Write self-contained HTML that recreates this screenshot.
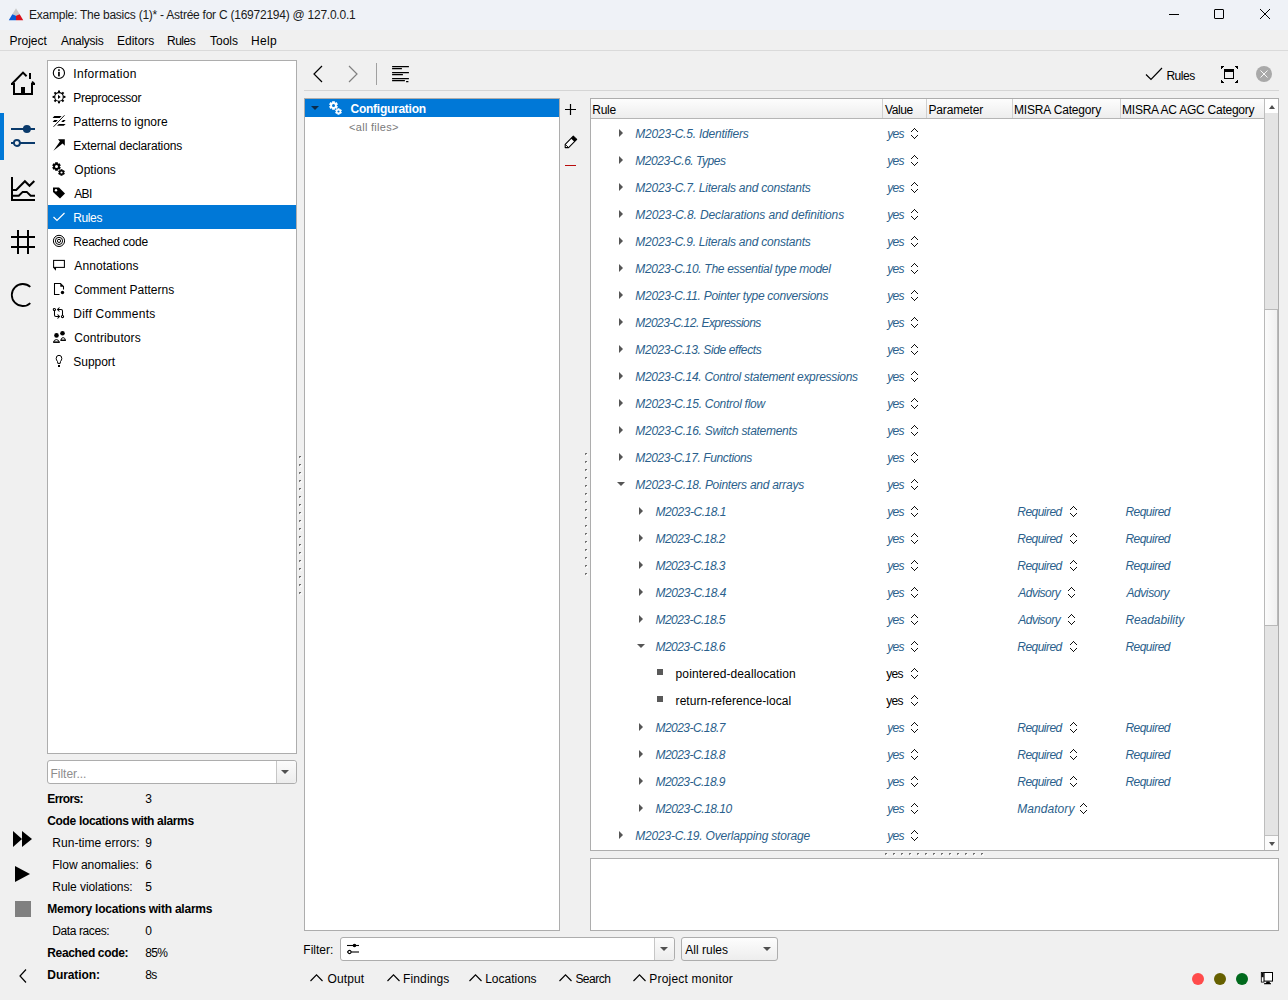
<!DOCTYPE html>
<html><head><meta charset="utf-8"><style>
*{margin:0;padding:0;box-sizing:border-box}
html,body{width:1288px;height:1000px;overflow:hidden;background:#f0f0f0;font-family:"Liberation Sans",sans-serif;font-size:12px;color:#000}
.a{position:absolute}
.t{position:absolute;white-space:nowrap;line-height:18px;font-size:12px}
.it{position:absolute;white-space:nowrap;line-height:27px;font-size:12px;font-style:italic;color:#2b5f8c}
.nt{position:absolute;white-space:nowrap;line-height:27px;font-size:12px;color:#000}
.b{font-weight:bold}
.tri-r{position:absolute;width:0;height:0;border-top:4px solid transparent;border-bottom:4px solid transparent;border-left:4px solid #555}
.tri-d{position:absolute;width:0;height:0;border-left:4px solid transparent;border-right:4px solid transparent;border-top:4px solid #555}
.sq{position:absolute;width:6px;height:6px;background:#595959}
.dot{position:absolute;width:2px;height:2px;border-top:1px solid #6a6a6a;border-left:1px solid #7e7e7e;box-shadow:1px 1px 0 #fafafa}
.ud{display:block}
.tx{position:absolute;white-space:nowrap;font-size:12px;line-height:16px}
</style></head><body>
<svg width="0" height="0" style="position:absolute"><symbol id="ud" viewBox="0 0 7 11"><rect x="0" y="3" width="1" height="1"/><rect x="1" y="2" width="1" height="1"/><rect x="2" y="1" width="1" height="1"/><rect x="3" y="0" width="1" height="1"/><rect x="4" y="1" width="1" height="1"/><rect x="5" y="2" width="1" height="1"/><rect x="6" y="3" width="1" height="1"/><rect x="0" y="7" width="1" height="1"/><rect x="1" y="8" width="1" height="1"/><rect x="2" y="9" width="1" height="1"/><rect x="3" y="10" width="1" height="1"/><rect x="4" y="9" width="1" height="1"/><rect x="5" y="8" width="1" height="1"/><rect x="6" y="7" width="1" height="1"/></symbol></svg>
<!-- title bar -->
<div class="a" style="left:0;top:0;width:1288px;height:30px;background:#eff2f7"></div>
<svg class="a" style="left:0;top:0" width="28" height="28" viewBox="0 0 28 28"><path d="M16 8.2 L19.7 14.2 L16 15.7 L12.3 14.2Z" fill="#c9c9c9"/><path d="M12.3 14.2 L16 15.7 L16 20.2 L8.8 20.2Z" fill="#0a5bd6"/><path d="M19.7 14.2 L23.2 20.2 L16 20.2 L16 15.7Z" fill="#d9101c"/></svg>
<div class="a" style="left:1169px;top:14px;width:10px;height:1px;background:#000"></div>
<div class="a" style="left:1214px;top:9px;width:10px;height:10px;border:1px solid #000;border-radius:1px"></div>
<svg class="a" style="left:1258px;top:7px" width="14" height="14" viewBox="0 0 14 14"><path d="M2 2 L12 12 M12 2 L2 12" stroke="#000" stroke-width="1"/></svg>
<!-- menu bar -->
<div class="a" style="left:0;top:30px;width:1288px;height:20px;background:#f0f0f0"></div>
<div class="a" style="left:0;top:50px;width:1288px;height:1px;background:#dadada"></div>

<!-- left icon strip -->
<div class="a" style="left:0;top:113px;width:4px;height:47px;background:#0078d7"></div>
<svg class="a" style="left:10px;top:70px" width="26" height="26" viewBox="0 0 26 26"><path d="M4 14 L4 24 L22 24 L22 14" stroke="#000" stroke-width="2" fill="none"/><path d="M1.8 14 L13 2.6 L16.6 6.2" stroke="#000" stroke-width="2" fill="none"/><rect x="1" y="13" width="4" height="2"/><rect x="21" y="13" width="4" height="2"/><path d="M22 11.6 L24.4 14" stroke="#000" stroke-width="2"/><rect x="19" y="3" width="2" height="6"/><rect x="11" y="17" width="4" height="7"/></svg>
<svg class="a" style="left:10px;top:124px" width="26" height="24" viewBox="0 0 26 24"><g stroke="#0a3a6b" stroke-width="2" fill="none"><line x1="1" y1="5" x2="25" y2="5"/><line x1="1" y1="19" x2="25" y2="19"/></g><circle cx="16.9" cy="5" r="4" fill="#0a3a6b"/><circle cx="6.9" cy="19" r="3" fill="#f0f0f0" stroke="#0a3a6b" stroke-width="1.9"/></svg>
<svg class="a" style="left:10px;top:176px" width="26" height="26" viewBox="0 0 26 26"><g stroke="#000" stroke-width="2" fill="none"><path d="M2 1 L2 24.1 L25 24.1"/><path d="M2 13.9 L6.2 13.9 L14.9 5.2 L19.5 9.8 L24.3 5"/><path d="M2 19.8 L8.8 19.8 L12.7 15.9 L16.7 15.9 L20.7 19.8 L25 19.8"/></g></svg>
<svg class="a" style="left:10px;top:229px" width="26" height="26" viewBox="0 0 26 26"><g stroke="#000" stroke-width="2"><line x1="8" y1="1" x2="8" y2="25"/><line x1="18" y1="1" x2="18" y2="25"/><line x1="1" y1="8" x2="25" y2="8"/><line x1="1" y1="18" x2="25" y2="18"/></g></svg>
<svg class="a" style="left:10px;top:282px" width="26" height="26" viewBox="0 0 26 26"><path d="M20.3 4.96 A11 11 0 1 0 20.3 21.04" stroke="#000" stroke-width="1.8" fill="none"/></svg>
<svg class="a" style="left:13px;top:830px" width="20" height="18" viewBox="0 0 20 18"><path d="M0 1 L9 9 L0 17Z M9 1 L19 9 L9 17Z" fill="#000"/></svg>
<svg class="a" style="left:14px;top:865px" width="18" height="18" viewBox="0 0 18 18"><path d="M1 1 L16 9 L1 17Z" fill="#000"/></svg>
<div class="a" style="left:15px;top:901px;width:16px;height:16px;background:#808080"></div>
<svg class="a" style="left:17px;top:968px" width="12" height="16" viewBox="0 0 12 16"><path d="M9 1.5 L3 8 L9 14.5" stroke="#000" stroke-width="1.2" fill="none"/></svg>

<!-- left list panel -->
<div class="a" style="left:47px;top:60px;width:250px;height:694px;background:#fff;border:1px solid #adadad"></div>
<div style="position:absolute;left:52px;top:66px;width:15px;height:15px"><svg width="15" height="15" viewBox="0 0 15 15"><circle cx="6.9" cy="6.9" r="5.6" fill="none" stroke="#000" stroke-width="1.1"/><rect x="6.1" y="5.8" width="1.7" height="4.6" fill="#000"/><rect x="6.1" y="3.3" width="1.7" height="1.6" fill="#000"/></svg></div>
<div style="position:absolute;left:52px;top:90px;width:15px;height:15px"><svg width="15" height="15" viewBox="0 0 15 15"><circle cx="7" cy="6.9" r="4.3" fill="none" stroke="#000" stroke-width="1.15"/><g fill="#000"><rect x="6" y="0.5" width="2" height="2" transform="rotate(0 7 6.9)"/><rect x="6" y="0.5" width="2" height="2" transform="rotate(45 7 6.9)"/><rect x="6" y="0.5" width="2" height="2" transform="rotate(90 7 6.9)"/><rect x="6" y="0.5" width="2" height="2" transform="rotate(135 7 6.9)"/><rect x="6" y="0.5" width="2" height="2" transform="rotate(180 7 6.9)"/><rect x="6" y="0.5" width="2" height="2" transform="rotate(225 7 6.9)"/><rect x="6" y="0.5" width="2" height="2" transform="rotate(270 7 6.9)"/><rect x="6" y="0.5" width="2" height="2" transform="rotate(315 7 6.9)"/></g><path d="M6 4.8 L8.6 6.9 L6 9Z" fill="#000"/></svg></div>
<div style="position:absolute;left:52px;top:114px;width:15px;height:15px"><svg width="15" height="15" viewBox="0 0 15 15"><g fill="#000"><path d="M2.3 2 L9.6 2 L7.8 3.9 L0.6 3.9Z"/><path d="M2.3 6 L5.8 6 L4 7.9 L0.6 7.9Z"/><path d="M11 6 L13.6 6 L11.8 7.9 L9.2 7.9Z"/><path d="M6.8 10 L13.6 10 L11.8 11.8 L5 11.8Z"/></g><line x1="1.5" y1="12.8" x2="12.5" y2="1.3" stroke="#fff" stroke-width="2.2"/><line x1="1.5" y1="12.8" x2="12.5" y2="1.3" stroke="#000" stroke-width="0.9"/></svg></div>
<div style="position:absolute;left:52px;top:138px;width:15px;height:15px"><svg width="15" height="15" viewBox="0 0 15 15"><path d="M6 1.2 L12.8 1.2 L12.8 7.8 L10.6 5.6 L1.4 12.7 L7.9 3.4Z" fill="#000"/></svg></div>
<div style="position:absolute;left:52px;top:162px;width:15px;height:15px"><svg width="16" height="16" viewBox="0 0 16 16"><path d="M3.20 1.36 L3.11 0.22 L5.89 0.22 L5.80 1.36 L6.57 1.80 L7.51 1.16 L8.90 3.56 L7.87 4.06 L7.87 4.94 L8.90 5.44 L7.51 7.84 L6.57 7.20 L5.80 7.64 L5.89 8.78 L3.11 8.78 L3.20 7.64 L2.43 7.20 L1.49 7.84 L0.10 5.44 L1.13 4.94 L1.13 4.06 L0.10 3.56 L1.49 1.16 L2.43 1.80Z M6.00 4.50 A1.5 1.5 0 1 0 3.00 4.50 A1.5 1.5 0 1 0 6.00 4.50Z" fill="#000" fill-rule="evenodd"/><path d="M8.51 8.10 L8.42 7.17 L10.58 7.17 L10.49 8.10 L11.08 8.44 L11.84 7.90 L12.92 9.77 L12.08 10.16 L12.08 10.84 L12.92 11.23 L11.84 13.10 L11.08 12.56 L10.49 12.90 L10.58 13.83 L8.42 13.83 L8.51 12.90 L7.92 12.56 L7.16 13.10 L6.08 11.23 L6.92 10.84 L6.92 10.16 L6.08 9.77 L7.16 7.90 L7.92 8.44Z M10.60 10.50 A1.1 1.1 0 1 0 8.40 10.50 A1.1 1.1 0 1 0 10.60 10.50Z" fill="#000" fill-rule="evenodd"/></svg></div>
<div style="position:absolute;left:52px;top:186px;width:15px;height:15px"><svg width="14" height="14" viewBox="0 0 14 14"><path d="M1 1.5 L7 1.5 L13 7.5 L8 12.5 L1 6Z" fill="#000"/><circle cx="4" cy="4.3" r="1.2" fill="#fff"/></svg></div>
<div style="position:absolute;left:48px;top:205px;width:248px;height:24px;background:#0078d7"></div>
<div style="position:absolute;left:52px;top:210px;width:15px;height:15px"><svg width="14" height="14" viewBox="0 0 14 14"><path d="M1.5 7 L5 10.5 L12.5 3" fill="none" stroke="#fff" stroke-width="1.2"/></svg></div>
<div style="position:absolute;left:52px;top:234px;width:15px;height:15px"><svg width="15" height="15" viewBox="0 0 15 15"><g fill="none" stroke="#000" stroke-width="1"><circle cx="7" cy="6.9" r="5.6"/><circle cx="7" cy="6.9" r="3.6"/><circle cx="7" cy="6.9" r="1.6"/></g></svg></div>
<div style="position:absolute;left:52px;top:258px;width:15px;height:15px"><svg width="15" height="15" viewBox="0 0 15 15"><rect x="1.6" y="2.4" width="10.8" height="7" fill="none" stroke="#000" stroke-width="1.05"/><path d="M1.1 9.4 L3.8 12.8 L4.2 9.4Z" fill="#000"/></svg></div>
<div style="position:absolute;left:52px;top:282px;width:15px;height:15px"><svg width="15" height="15" viewBox="0 0 15 15"><path d="M7.5 12.5 L2.5 12.5 L2.5 1.5 L8.5 1.5 L11.5 4.5 L11.5 7.5" fill="none" stroke="#000" stroke-width="1.05"/><path d="M8.3 1.5 L11.5 4.7 L8.3 4.7Z" fill="#000"/><circle cx="10.5" cy="10.5" r="1.7" fill="#000"/></svg></div>
<div style="position:absolute;left:52px;top:306px;width:15px;height:15px"><svg width="15" height="15" viewBox="0 0 15 15"><g fill="none" stroke="#000" stroke-width="1.05"><circle cx="2.4" cy="3.5" r="1.1"/><circle cx="10.5" cy="10.5" r="1.1"/><path d="M2.5 4.6 L2.5 9 Q2.5 10.5 4 10.5 L7.5 10.5 M5.5 8.5 L7.5 10.5 L5.5 12.5"/><path d="M10.5 9.4 L10.5 5 Q10.5 3.5 9 3.5 L5.5 3.5 M7.5 1.5 L5.5 3.5 L7.5 5.5"/></g></svg></div>
<div style="position:absolute;left:52px;top:330px;width:15px;height:15px"><svg width="15" height="15" viewBox="0 0 15 15"><circle cx="4.5" cy="5.4" r="2.3" fill="#000"/><circle cx="10.5" cy="3.3" r="2.3" fill="#000"/><path d="M1.6 12.2 Q2 9.6 4.4 9.6 Q6.8 9.6 7.2 12.2Z" fill="none" stroke="#000" stroke-width="1"/><rect x="1.2" y="11.6" width="6.6" height="1.2" fill="#000"/><path d="M8.9 10.3 Q9.3 7.6 11.1 7.6 Q13 7.6 13.4 10.3Z" fill="none" stroke="#000" stroke-width="1"/><rect x="8.5" y="9.7" width="5.3" height="1.2" fill="#000"/></svg></div>
<div style="position:absolute;left:52px;top:354px;width:15px;height:15px"><svg width="15" height="15" viewBox="0 0 15 15"><path d="M5.8 9.4 L5.5 7.5 Q4.2 6 4.2 4.4 Q4.2 1.3 7 1.3 Q9.8 1.3 9.8 4.4 Q9.8 6 8.5 7.5 L8.2 9.4Z" fill="none" stroke="#000" stroke-width="1"/><rect x="6" y="11" width="2" height="2" fill="#000"/></svg></div>
<!-- left filter combo -->
<div class="a" style="left:47px;top:760px;width:250px;height:24px;background:#fff;border:1px solid #adadad;border-radius:3px"></div>
<div class="a" style="left:276px;top:761px;width:20px;height:22px;background:linear-gradient(#fbfbfb,#ececec);border-left:1px solid #c6c6c6;border-radius:0 3px 3px 0"></div>
<div class="tri-d" style="left:281px;top:770px;border-top-color:#505050;border-left-width:4px;border-right-width:4px;border-top-width:4px"></div>
<!-- stats -->

<!-- splitters -->
<div class="dot" style="left:299px;top:456px"></div><div class="dot" style="left:299px;top:464px"></div><div class="dot" style="left:299px;top:472px"></div><div class="dot" style="left:299px;top:480px"></div><div class="dot" style="left:299px;top:488px"></div><div class="dot" style="left:299px;top:496px"></div><div class="dot" style="left:299px;top:504px"></div><div class="dot" style="left:299px;top:512px"></div><div class="dot" style="left:299px;top:520px"></div><div class="dot" style="left:299px;top:528px"></div><div class="dot" style="left:299px;top:536px"></div><div class="dot" style="left:299px;top:544px"></div><div class="dot" style="left:299px;top:552px"></div><div class="dot" style="left:299px;top:560px"></div><div class="dot" style="left:299px;top:568px"></div><div class="dot" style="left:299px;top:576px"></div><div class="dot" style="left:299px;top:584px"></div><div class="dot" style="left:299px;top:592px"></div>
<div class="dot" style="left:585px;top:453px"></div><div class="dot" style="left:585px;top:461px"></div><div class="dot" style="left:585px;top:469px"></div><div class="dot" style="left:585px;top:477px"></div><div class="dot" style="left:585px;top:485px"></div><div class="dot" style="left:585px;top:493px"></div><div class="dot" style="left:585px;top:501px"></div><div class="dot" style="left:585px;top:509px"></div><div class="dot" style="left:585px;top:517px"></div><div class="dot" style="left:585px;top:525px"></div><div class="dot" style="left:585px;top:533px"></div><div class="dot" style="left:585px;top:541px"></div><div class="dot" style="left:585px;top:549px"></div><div class="dot" style="left:585px;top:557px"></div><div class="dot" style="left:585px;top:565px"></div><div class="dot" style="left:585px;top:573px"></div>
<div class="dot" style="left:885px;top:853px"></div><div class="dot" style="left:893px;top:853px"></div><div class="dot" style="left:901px;top:853px"></div><div class="dot" style="left:909px;top:853px"></div><div class="dot" style="left:917px;top:853px"></div><div class="dot" style="left:925px;top:853px"></div><div class="dot" style="left:933px;top:853px"></div><div class="dot" style="left:941px;top:853px"></div><div class="dot" style="left:949px;top:853px"></div><div class="dot" style="left:957px;top:853px"></div><div class="dot" style="left:965px;top:853px"></div><div class="dot" style="left:973px;top:853px"></div><div class="dot" style="left:981px;top:853px"></div>

<!-- toolbar -->
<svg class="a" style="left:312px;top:65px" width="12" height="18" viewBox="0 0 12 18"><path d="M10 1 L2 9 L10 17" stroke="#000" stroke-width="1.2" fill="none"/></svg>
<svg class="a" style="left:347px;top:65px" width="12" height="18" viewBox="0 0 12 18"><path d="M2 1 L10 9 L2 17" stroke="#808080" stroke-width="1.2" fill="none"/></svg>
<div class="a" style="left:376px;top:63px;width:1px;height:22px;background:#a0a0a0"></div>
<svg class="a" style="left:391px;top:65px" width="18" height="18" viewBox="0 0 18 18"><g fill="#000"><rect x="1" y="1" width="17" height="1.2" rx="0.5"/><rect x="1" y="3" width="10" height="1.2" rx="0.5"/><rect x="1" y="7" width="17" height="1.2" rx="0.5"/><rect x="1" y="9" width="11" height="1.2" rx="0.5"/><rect x="1" y="13" width="17" height="1.2" rx="0.5"/><rect x="1" y="15" width="13" height="1.2" rx="0.5"/><rect x="15" y="16" width="2.5" height="1.2" rx="0.5"/></g></svg>
<svg class="a" style="left:1145px;top:67px" width="18" height="14" viewBox="0 0 18 14"><path d="M1 7.5 L6 12.5 L17 1" stroke="#000" stroke-width="1.2" fill="none"/></svg>
<svg class="a" style="left:1220px;top:65px" width="18" height="18" viewBox="0 0 18 18" shape-rendering="crispEdges"><g fill="#000"><path d="M1 1 L4 1 L1 4Z"/><path d="M17.5 1 L14.5 1 L17.5 4Z"/><path d="M1 17.5 L1 14.5 L4 17.5Z"/><path d="M17.5 17.5 L14.5 17.5 L17.5 14.5Z"/><rect x="4" y="4" width="10" height="3"/></g><rect x="4.5" y="4.5" width="9" height="9" fill="none" stroke="#000" stroke-width="1"/></svg>
<svg class="a" style="left:1255px;top:65px" width="18" height="18" viewBox="0 0 18 18"><circle cx="9" cy="9" r="8" fill="#a9a9a9"/><path d="M5.5 5.5 L12.5 12.5 M12.5 5.5 L5.5 12.5" stroke="#fff" stroke-width="0.9"/></svg>
<div class="a" style="left:304px;top:90px;width:975px;height:1px;background:#d5d5d5"></div>

<!-- config tree -->
<div class="a" style="left:304px;top:98px;width:256px;height:833px;background:#fff;border:1px solid #adadad"></div>
<div class="a" style="left:305px;top:99px;width:254px;height:18px;background:#0078d7"></div>
<div class="tri-d" style="left:311px;top:106px;border-top-color:#0a2a4a"></div>
<svg class="a" style="left:329px;top:100.5px" width="16" height="16" viewBox="0 0 16 16"><path d="M3.20 1.36 L3.08 0.13 L5.92 0.13 L5.80 1.36 L6.57 1.80 L7.58 1.08 L9.00 3.54 L7.87 4.06 L7.87 4.94 L9.00 5.46 L7.58 7.92 L6.57 7.20 L5.80 7.64 L5.92 8.87 L3.08 8.87 L3.20 7.64 L2.43 7.20 L1.42 7.92 L0.00 5.46 L1.13 4.94 L1.13 4.06 L0.00 3.54 L1.42 1.08 L2.43 1.80Z M6.00 4.50 A1.5 1.5 0 1 0 3.00 4.50 A1.5 1.5 0 1 0 6.00 4.50Z" fill="#fff" fill-rule="evenodd"/><path d="M8.51 8.10 L8.42 7.17 L10.58 7.17 L10.49 8.10 L11.08 8.44 L11.84 7.90 L12.92 9.77 L12.08 10.16 L12.08 10.84 L12.92 11.23 L11.84 13.10 L11.08 12.56 L10.49 12.90 L10.58 13.83 L8.42 13.83 L8.51 12.90 L7.92 12.56 L7.16 13.10 L6.08 11.23 L6.92 10.84 L6.92 10.16 L6.08 9.77 L7.16 7.90 L7.92 8.44Z M10.60 10.50 A1.1 1.1 0 1 0 8.40 10.50 A1.1 1.1 0 1 0 10.60 10.50Z" fill="#fff" fill-rule="evenodd"/></svg>
<!-- side buttons -->
<svg class="a" style="left:564px;top:103px" width="13" height="13" viewBox="0 0 13 13"><path d="M6.5 1 L6.5 12 M1 6.5 L12 6.5" stroke="#000" stroke-width="1.2"/></svg>
<svg class="a" style="left:564px;top:135px" width="14" height="14" viewBox="0 0 14 14"><path d="M9.3 1.2 L12.7 4.4 L4.6 12.6 L1.2 12.6 L1.2 9.3Z" fill="#fff" stroke="#000" stroke-width="1.1" stroke-linejoin="round"/><path d="M9.3 1.2 L12.7 4.4 L10.4 6.7 L7 3.5Z" fill="#000"/><path d="M1.2 9.3 L4.6 12.6" stroke="#000" stroke-width="0.9"/></svg>
<div class="a" style="left:565px;top:165px;width:11px;height:1px;background:#b80c0c"></div>

<!-- rules table -->
<div class="a" style="left:590px;top:98px;width:689px;height:753px;background:#fff;border:1px solid #adadad"></div>
<div class="a" style="left:591px;top:99px;width:673px;height:20px;background:linear-gradient(#fdfdfd,#ededed);border-bottom:1px solid #b5b5b5"></div>
<div class="a" style="left:882px;top:99px;width:1px;height:19px;background:#d0d0d0"></div>
<div class="a" style="left:926px;top:99px;width:1px;height:19px;background:#d0d0d0"></div>
<div class="a" style="left:1012px;top:99px;width:1px;height:19px;background:#d0d0d0"></div>
<div class="a" style="left:1120px;top:99px;width:1px;height:19px;background:#d0d0d0"></div>
<!-- scrollbar -->
<div class="a" style="left:1264px;top:99px;width:14px;height:751px;background:#e4e4e4;border-left:1px solid #bdbdbd"></div>
<div class="a" style="left:1265px;top:99px;width:13px;height:14px;background:#fff"></div>
<div class="tri-d" style="left:1269px;top:105px;border-top:0;border-bottom:4px solid #505050;border-left-width:3.5px;border-right-width:3.5px"></div>
<div class="a" style="left:1264px;top:309px;width:14px;height:317px;background:linear-gradient(90deg,#fbfbfb,#f0f0f0);border:1px solid #b9b9b9"></div>
<div class="a" style="left:1265px;top:835px;width:13px;height:15px;background:#fbfbfb;border-top:1px solid #c0c0c0"></div>
<div class="tri-d" style="left:1269px;top:842px;border-top-color:#505050;border-left-width:3.5px;border-right-width:3.5px"></div>
<div class="tri-r" style="left:619px;top:129px"></div>
<div class="tri-r" style="left:619px;top:156px"></div>
<div class="tri-r" style="left:619px;top:183px"></div>
<div class="tri-r" style="left:619px;top:210px"></div>
<div class="tri-r" style="left:619px;top:237px"></div>
<div class="tri-r" style="left:619px;top:264px"></div>
<div class="tri-r" style="left:619px;top:291px"></div>
<div class="tri-r" style="left:619px;top:318px"></div>
<div class="tri-r" style="left:619px;top:345px"></div>
<div class="tri-r" style="left:619px;top:372px"></div>
<div class="tri-r" style="left:619px;top:399px"></div>
<div class="tri-r" style="left:619px;top:426px"></div>
<div class="tri-r" style="left:619px;top:453px"></div>
<div class="tri-d" style="left:617px;top:482px"></div>
<div class="tri-r" style="left:639px;top:507px"></div>
<div class="tri-r" style="left:639px;top:534px"></div>
<div class="tri-r" style="left:639px;top:561px"></div>
<div class="tri-r" style="left:639px;top:588px"></div>
<div class="tri-r" style="left:639px;top:615px"></div>
<div class="tri-d" style="left:637px;top:644px"></div>
<div class="sq" style="left:657px;top:669px"></div>
<div class="sq" style="left:657px;top:696px"></div>
<div class="tri-r" style="left:639px;top:723px"></div>
<div class="tri-r" style="left:639px;top:750px"></div>
<div class="tri-r" style="left:639px;top:777px"></div>
<div class="tri-r" style="left:639px;top:804px"></div>
<div class="tri-r" style="left:619px;top:831px"></div>
<div style="position:absolute;left:911px;top:128px"><svg class="ud" width="7" height="11" shape-rendering="crispEdges" fill="#111"><use href="#ud"/></svg></div>
<div style="position:absolute;left:911px;top:155px"><svg class="ud" width="7" height="11" shape-rendering="crispEdges" fill="#111"><use href="#ud"/></svg></div>
<div style="position:absolute;left:911px;top:182px"><svg class="ud" width="7" height="11" shape-rendering="crispEdges" fill="#111"><use href="#ud"/></svg></div>
<div style="position:absolute;left:911px;top:209px"><svg class="ud" width="7" height="11" shape-rendering="crispEdges" fill="#111"><use href="#ud"/></svg></div>
<div style="position:absolute;left:911px;top:236px"><svg class="ud" width="7" height="11" shape-rendering="crispEdges" fill="#111"><use href="#ud"/></svg></div>
<div style="position:absolute;left:911px;top:263px"><svg class="ud" width="7" height="11" shape-rendering="crispEdges" fill="#111"><use href="#ud"/></svg></div>
<div style="position:absolute;left:911px;top:290px"><svg class="ud" width="7" height="11" shape-rendering="crispEdges" fill="#111"><use href="#ud"/></svg></div>
<div style="position:absolute;left:911px;top:317px"><svg class="ud" width="7" height="11" shape-rendering="crispEdges" fill="#111"><use href="#ud"/></svg></div>
<div style="position:absolute;left:911px;top:344px"><svg class="ud" width="7" height="11" shape-rendering="crispEdges" fill="#111"><use href="#ud"/></svg></div>
<div style="position:absolute;left:911px;top:371px"><svg class="ud" width="7" height="11" shape-rendering="crispEdges" fill="#111"><use href="#ud"/></svg></div>
<div style="position:absolute;left:911px;top:398px"><svg class="ud" width="7" height="11" shape-rendering="crispEdges" fill="#111"><use href="#ud"/></svg></div>
<div style="position:absolute;left:911px;top:425px"><svg class="ud" width="7" height="11" shape-rendering="crispEdges" fill="#111"><use href="#ud"/></svg></div>
<div style="position:absolute;left:911px;top:452px"><svg class="ud" width="7" height="11" shape-rendering="crispEdges" fill="#111"><use href="#ud"/></svg></div>
<div style="position:absolute;left:911px;top:479px"><svg class="ud" width="7" height="11" shape-rendering="crispEdges" fill="#111"><use href="#ud"/></svg></div>
<div style="position:absolute;left:911px;top:506px"><svg class="ud" width="7" height="11" shape-rendering="crispEdges" fill="#111"><use href="#ud"/></svg></div>
<div style="position:absolute;left:1070px;top:506px"><svg class="ud" width="7" height="11" shape-rendering="crispEdges" fill="#111"><use href="#ud"/></svg></div>
<div style="position:absolute;left:911px;top:533px"><svg class="ud" width="7" height="11" shape-rendering="crispEdges" fill="#111"><use href="#ud"/></svg></div>
<div style="position:absolute;left:1070px;top:533px"><svg class="ud" width="7" height="11" shape-rendering="crispEdges" fill="#111"><use href="#ud"/></svg></div>
<div style="position:absolute;left:911px;top:560px"><svg class="ud" width="7" height="11" shape-rendering="crispEdges" fill="#111"><use href="#ud"/></svg></div>
<div style="position:absolute;left:1070px;top:560px"><svg class="ud" width="7" height="11" shape-rendering="crispEdges" fill="#111"><use href="#ud"/></svg></div>
<div style="position:absolute;left:911px;top:587px"><svg class="ud" width="7" height="11" shape-rendering="crispEdges" fill="#111"><use href="#ud"/></svg></div>
<div style="position:absolute;left:1068px;top:587px"><svg class="ud" width="7" height="11" shape-rendering="crispEdges" fill="#111"><use href="#ud"/></svg></div>
<div style="position:absolute;left:911px;top:614px"><svg class="ud" width="7" height="11" shape-rendering="crispEdges" fill="#111"><use href="#ud"/></svg></div>
<div style="position:absolute;left:1068px;top:614px"><svg class="ud" width="7" height="11" shape-rendering="crispEdges" fill="#111"><use href="#ud"/></svg></div>
<div style="position:absolute;left:911px;top:641px"><svg class="ud" width="7" height="11" shape-rendering="crispEdges" fill="#111"><use href="#ud"/></svg></div>
<div style="position:absolute;left:1070px;top:641px"><svg class="ud" width="7" height="11" shape-rendering="crispEdges" fill="#111"><use href="#ud"/></svg></div>
<div style="position:absolute;left:911px;top:668px"><svg class="ud" width="7" height="11" shape-rendering="crispEdges" fill="#111"><use href="#ud"/></svg></div>
<div style="position:absolute;left:911px;top:695px"><svg class="ud" width="7" height="11" shape-rendering="crispEdges" fill="#111"><use href="#ud"/></svg></div>
<div style="position:absolute;left:911px;top:722px"><svg class="ud" width="7" height="11" shape-rendering="crispEdges" fill="#111"><use href="#ud"/></svg></div>
<div style="position:absolute;left:1070px;top:722px"><svg class="ud" width="7" height="11" shape-rendering="crispEdges" fill="#111"><use href="#ud"/></svg></div>
<div style="position:absolute;left:911px;top:749px"><svg class="ud" width="7" height="11" shape-rendering="crispEdges" fill="#111"><use href="#ud"/></svg></div>
<div style="position:absolute;left:1070px;top:749px"><svg class="ud" width="7" height="11" shape-rendering="crispEdges" fill="#111"><use href="#ud"/></svg></div>
<div style="position:absolute;left:911px;top:776px"><svg class="ud" width="7" height="11" shape-rendering="crispEdges" fill="#111"><use href="#ud"/></svg></div>
<div style="position:absolute;left:1070px;top:776px"><svg class="ud" width="7" height="11" shape-rendering="crispEdges" fill="#111"><use href="#ud"/></svg></div>
<div style="position:absolute;left:911px;top:803px"><svg class="ud" width="7" height="11" shape-rendering="crispEdges" fill="#111"><use href="#ud"/></svg></div>
<div style="position:absolute;left:1080px;top:803px"><svg class="ud" width="7" height="11" shape-rendering="crispEdges" fill="#111"><use href="#ud"/></svg></div>
<div style="position:absolute;left:911px;top:830px"><svg class="ud" width="7" height="11" shape-rendering="crispEdges" fill="#111"><use href="#ud"/></svg></div>

<!-- description box -->
<div class="a" style="left:590px;top:858px;width:689px;height:73px;background:#fff;border:1px solid #adadad"></div>

<!-- filter row -->
<div class="a" style="left:340px;top:937px;width:335px;height:24px;background:#fff;border:1px solid #adadad;border-radius:3px"></div>
<div class="a" style="left:654px;top:938px;width:20px;height:22px;background:linear-gradient(#fbfbfb,#ececec);border-left:1px solid #c6c6c6;border-radius:0 3px 3px 0"></div>
<div class="tri-d" style="left:660px;top:947px;border-top-color:#505050"></div>
<svg class="a" style="left:346px;top:943px" width="14" height="12" viewBox="0 0 14 12"><g stroke="#000" stroke-width="1.1"><line x1="1" y1="2.5" x2="13" y2="2.5"/><line x1="1" y1="9" x2="13" y2="9"/></g><circle cx="8.5" cy="2.5" r="1.8" fill="#000"/><circle cx="3.5" cy="9" r="1.6" fill="#fff" stroke="#000" stroke-width="1.1"/></svg>
<div class="a" style="left:681px;top:937px;width:97px;height:24px;background:linear-gradient(#fdfdfd,#ededed);border:1px solid #adadad;border-radius:3px"></div>
<div class="tri-d" style="left:763px;top:947px;border-top-color:#505050"></div>

<!-- bottom tabs -->
<svg class="a" style="left:310px;top:973px" width="13" height="9" viewBox="0 0 13 9"><path d="M0.5 8 L6.5 1.8 L12.5 8" stroke="#000" stroke-width="1.15" fill="none"/></svg>
<svg class="a" style="left:387px;top:973px" width="13" height="9" viewBox="0 0 13 9"><path d="M0.5 8 L6.5 1.8 L12.5 8" stroke="#000" stroke-width="1.15" fill="none"/></svg>
<svg class="a" style="left:469px;top:973px" width="13" height="9" viewBox="0 0 13 9"><path d="M0.5 8 L6.5 1.8 L12.5 8" stroke="#000" stroke-width="1.15" fill="none"/></svg>
<svg class="a" style="left:559px;top:973px" width="13" height="9" viewBox="0 0 13 9"><path d="M0.5 8 L6.5 1.8 L12.5 8" stroke="#000" stroke-width="1.15" fill="none"/></svg>
<svg class="a" style="left:633px;top:973px" width="13" height="9" viewBox="0 0 13 9"><path d="M0.5 8 L6.5 1.8 L12.5 8" stroke="#000" stroke-width="1.15" fill="none"/></svg>

<!-- status -->
<div class="a" style="left:1192px;top:973px;width:12px;height:12px;border-radius:50%;background:#ff4b4b"></div>
<div class="a" style="left:1214px;top:973px;width:12px;height:12px;border-radius:50%;background:#666000"></div>
<div class="a" style="left:1236px;top:973px;width:12px;height:12px;border-radius:50%;background:#00691c"></div>
<svg class="a" style="left:1258px;top:969px" width="18" height="18" viewBox="1258 969 18 18"><rect x="1263.9" y="972.5" width="8.6" height="8.6" fill="#fff" stroke="#000" stroke-width="1"/><rect x="1261.3" y="972.5" width="2.6" height="9.6" fill="#fff" stroke="#000" stroke-width="0.8"/><rect x="1261.8" y="973.3" width="1.6" height="1.4" fill="none" stroke="#000" stroke-width="0.6"/><rect x="1261.8" y="975.5" width="1.6" height="1.4" fill="none" stroke="#000" stroke-width="0.6"/><path d="M1266.5 981.5 L1269.5 981.5 L1270 983 L1271 983.2 L1271 984.2 L1264 984.2 L1264 983.2 L1266 983Z" fill="#000"/></svg>
<!-- text layer -->
<div class="tx" style="left:29.00px;top:7px;letter-spacing:-0.243px;color:#1a1a1a">Example: The basics (1)* - Astrée for C (16972194) @ 127.0.0.1</div>
<div class="tx" style="left:9.60px;top:33px;letter-spacing:-0.033px;">Project</div>
<div class="tx" style="left:61.00px;top:33px;letter-spacing:-0.286px;">Analysis</div>
<div class="tx" style="left:117.00px;top:33px;letter-spacing:0.000px;">Editors</div>
<div class="tx" style="left:167.00px;top:33px;letter-spacing:-0.500px;">Rules</div>
<div class="tx" style="left:210.00px;top:33px;letter-spacing:0.000px;">Tools</div>
<div class="tx" style="left:251.00px;top:33px;letter-spacing:0.333px;">Help</div>
<div class="tx" style="left:73.30px;top:66px;letter-spacing:0.320px;">Information</div>
<div class="tx" style="left:73.30px;top:90px;letter-spacing:-0.291px;">Preprocessor</div>
<div class="tx" style="left:73.30px;top:114px;letter-spacing:-0.024px;">Patterns to ignore</div>
<div class="tx" style="left:73.30px;top:138px;letter-spacing:-0.160px;">External declarations</div>
<div class="tx" style="left:74.30px;top:162px;letter-spacing:0.033px;">Options</div>
<div class="tx" style="left:74.30px;top:186px;letter-spacing:-0.700px;">ABI</div>
<div class="tx" style="left:73.30px;top:210px;letter-spacing:-0.400px;color:#fff">Rules</div>
<div class="tx" style="left:73.30px;top:234px;letter-spacing:-0.236px;">Reached code</div>
<div class="tx" style="left:74.30px;top:258px;letter-spacing:0.080px;">Annotations</div>
<div class="tx" style="left:74.30px;top:282px;letter-spacing:-0.013px;">Comment Patterns</div>
<div class="tx" style="left:73.30px;top:306px;letter-spacing:0.233px;">Diff Comments</div>
<div class="tx" style="left:74.30px;top:330px;letter-spacing:0.091px;">Contributors</div>
<div class="tx" style="left:73.30px;top:354px;letter-spacing:-0.033px;">Support</div>
<div class="tx" style="left:50.40px;top:766px;letter-spacing:0.000px;color:#8d8d8d">Filter...</div>
<div class="tx" style="left:47.30px;top:791px;letter-spacing:-0.633px;font-weight:bold">Errors:</div>
<div class="tx" style="left:47.30px;top:813px;letter-spacing:-0.344px;font-weight:bold">Code locations with alarms</div>
<div class="tx" style="left:52.30px;top:835px;letter-spacing:0.040px;">Run-time errors:</div>
<div class="tx" style="left:52.30px;top:857px;letter-spacing:-0.014px;">Flow anomalies:</div>
<div class="tx" style="left:52.30px;top:879px;letter-spacing:-0.067px;">Rule violations:</div>
<div class="tx" style="left:47.30px;top:901px;letter-spacing:-0.230px;font-weight:bold">Memory locations with alarms</div>
<div class="tx" style="left:52.30px;top:923px;letter-spacing:-0.400px;">Data races:</div>
<div class="tx" style="left:47.30px;top:945px;letter-spacing:-0.350px;font-weight:bold">Reached code:</div>
<div class="tx" style="left:47.30px;top:967px;letter-spacing:-0.075px;font-weight:bold">Duration:</div>
<div class="tx" style="left:145.30px;top:791px;letter-spacing:0.000px;">3</div>
<div class="tx" style="left:145.30px;top:835px;letter-spacing:0.000px;">9</div>
<div class="tx" style="left:145.30px;top:857px;letter-spacing:0.000px;">6</div>
<div class="tx" style="left:145.30px;top:879px;letter-spacing:0.000px;">5</div>
<div class="tx" style="left:145.30px;top:923px;letter-spacing:0.000px;">0</div>
<div class="tx" style="left:145.30px;top:945px;letter-spacing:-0.700px;">85%</div>
<div class="tx" style="left:145.30px;top:967px;letter-spacing:-0.700px;">8s</div>
<div class="tx" style="left:1166.40px;top:68px;letter-spacing:-0.450px;">Rules</div>
<div class="tx" style="left:350.60px;top:101px;letter-spacing:-0.267px;font-weight:bold;color:#fff">Configuration</div>
<div class="tx" style="left:349.00px;top:119px;letter-spacing:0.300px;color:#7a7a7a;font-size:11px">&lt;all files&gt;</div>
<div class="tx" style="left:592.30px;top:102px;letter-spacing:-0.267px;">Rule</div>
<div class="tx" style="left:885.10px;top:102px;letter-spacing:-0.400px;">Value</div>
<div class="tx" style="left:928.50px;top:102px;letter-spacing:-0.175px;">Parameter</div>
<div class="tx" style="left:1014.00px;top:102px;letter-spacing:-0.169px;">MISRA Category</div>
<div class="tx" style="left:1122.10px;top:102px;letter-spacing:-0.250px;">MISRA AC AGC Category</div>
<div class="tx" style="left:303.30px;top:942px;letter-spacing:0.000px;">Filter:</div>
<div class="tx" style="left:685.30px;top:942px;letter-spacing:0.000px;">All rules</div>
<div class="tx" style="left:327.60px;top:971px;letter-spacing:0.080px;">Output</div>
<div class="tx" style="left:403.00px;top:971px;letter-spacing:0.143px;">Findings</div>
<div class="tx" style="left:485.20px;top:971px;letter-spacing:0.000px;">Locations</div>
<div class="tx" style="left:575.40px;top:971px;letter-spacing:-0.520px;">Search</div>
<div class="tx" style="left:649.30px;top:971px;letter-spacing:0.200px;">Project monitor</div>
<div class="tx" style="left:635.30px;top:126px;letter-spacing:-0.219px;font-style:italic;color:#2b5f8c">M2023-C.5. Identifiers</div>
<div class="tx" style="left:887.20px;top:126px;letter-spacing:-0.700px;font-style:italic;color:#2b5f8c">yes</div>
<div class="tx" style="left:635.30px;top:153px;letter-spacing:-0.480px;font-style:italic;color:#2b5f8c">M2023-C.6. Types</div>
<div class="tx" style="left:887.20px;top:153px;letter-spacing:-0.700px;font-style:italic;color:#2b5f8c">yes</div>
<div class="tx" style="left:635.30px;top:180px;letter-spacing:-0.225px;font-style:italic;color:#2b5f8c">M2023-C.7. Literals and constants</div>
<div class="tx" style="left:887.20px;top:180px;letter-spacing:-0.700px;font-style:italic;color:#2b5f8c">yes</div>
<div class="tx" style="left:635.30px;top:207px;letter-spacing:-0.121px;font-style:italic;color:#2b5f8c">M2023-C.8. Declarations and definitions</div>
<div class="tx" style="left:887.20px;top:207px;letter-spacing:-0.700px;font-style:italic;color:#2b5f8c">yes</div>
<div class="tx" style="left:635.30px;top:234px;letter-spacing:-0.225px;font-style:italic;color:#2b5f8c">M2023-C.9. Literals and constants</div>
<div class="tx" style="left:887.20px;top:234px;letter-spacing:-0.700px;font-style:italic;color:#2b5f8c">yes</div>
<div class="tx" style="left:635.30px;top:261px;letter-spacing:-0.303px;font-style:italic;color:#2b5f8c">M2023-C.10. The essential type model</div>
<div class="tx" style="left:887.20px;top:261px;letter-spacing:-0.700px;font-style:italic;color:#2b5f8c">yes</div>
<div class="tx" style="left:635.30px;top:288px;letter-spacing:-0.286px;font-style:italic;color:#2b5f8c">M2023-C.11. Pointer type conversions</div>
<div class="tx" style="left:887.20px;top:288px;letter-spacing:-0.700px;font-style:italic;color:#2b5f8c">yes</div>
<div class="tx" style="left:635.30px;top:315px;letter-spacing:-0.545px;font-style:italic;color:#2b5f8c">M2023-C.12. Expressions</div>
<div class="tx" style="left:887.20px;top:315px;letter-spacing:-0.700px;font-style:italic;color:#2b5f8c">yes</div>
<div class="tx" style="left:635.30px;top:342px;letter-spacing:-0.391px;font-style:italic;color:#2b5f8c">M2023-C.13. Side effects</div>
<div class="tx" style="left:887.20px;top:342px;letter-spacing:-0.700px;font-style:italic;color:#2b5f8c">yes</div>
<div class="tx" style="left:635.30px;top:369px;letter-spacing:-0.300px;font-style:italic;color:#2b5f8c">M2023-C.14. Control statement expressions</div>
<div class="tx" style="left:887.20px;top:369px;letter-spacing:-0.700px;font-style:italic;color:#2b5f8c">yes</div>
<div class="tx" style="left:635.30px;top:396px;letter-spacing:-0.270px;font-style:italic;color:#2b5f8c">M2023-C.15. Control flow</div>
<div class="tx" style="left:887.20px;top:396px;letter-spacing:-0.700px;font-style:italic;color:#2b5f8c">yes</div>
<div class="tx" style="left:635.30px;top:423px;letter-spacing:-0.279px;font-style:italic;color:#2b5f8c">M2023-C.16. Switch statements</div>
<div class="tx" style="left:887.20px;top:423px;letter-spacing:-0.700px;font-style:italic;color:#2b5f8c">yes</div>
<div class="tx" style="left:635.30px;top:450px;letter-spacing:-0.390px;font-style:italic;color:#2b5f8c">M2023-C.17. Functions</div>
<div class="tx" style="left:887.20px;top:450px;letter-spacing:-0.700px;font-style:italic;color:#2b5f8c">yes</div>
<div class="tx" style="left:635.30px;top:477px;letter-spacing:-0.260px;font-style:italic;color:#2b5f8c">M2023-C.18. Pointers and arrays</div>
<div class="tx" style="left:887.20px;top:477px;letter-spacing:-0.700px;font-style:italic;color:#2b5f8c">yes</div>
<div class="tx" style="left:655.50px;top:504px;letter-spacing:-0.455px;font-style:italic;color:#2b5f8c">M2023-C.18.1</div>
<div class="tx" style="left:887.20px;top:504px;letter-spacing:-0.700px;font-style:italic;color:#2b5f8c">yes</div>
<div class="tx" style="left:1017.30px;top:504px;letter-spacing:-0.543px;font-style:italic;color:#2b5f8c">Required</div>
<div class="tx" style="left:1125.40px;top:504px;letter-spacing:-0.514px;font-style:italic;color:#2b5f8c">Required</div>
<div class="tx" style="left:655.50px;top:531px;letter-spacing:-0.545px;font-style:italic;color:#2b5f8c">M2023-C.18.2</div>
<div class="tx" style="left:887.20px;top:531px;letter-spacing:-0.700px;font-style:italic;color:#2b5f8c">yes</div>
<div class="tx" style="left:1017.30px;top:531px;letter-spacing:-0.543px;font-style:italic;color:#2b5f8c">Required</div>
<div class="tx" style="left:1125.40px;top:531px;letter-spacing:-0.514px;font-style:italic;color:#2b5f8c">Required</div>
<div class="tx" style="left:655.50px;top:558px;letter-spacing:-0.545px;font-style:italic;color:#2b5f8c">M2023-C.18.3</div>
<div class="tx" style="left:887.20px;top:558px;letter-spacing:-0.700px;font-style:italic;color:#2b5f8c">yes</div>
<div class="tx" style="left:1017.30px;top:558px;letter-spacing:-0.543px;font-style:italic;color:#2b5f8c">Required</div>
<div class="tx" style="left:1125.40px;top:558px;letter-spacing:-0.514px;font-style:italic;color:#2b5f8c">Required</div>
<div class="tx" style="left:655.50px;top:585px;letter-spacing:-0.455px;font-style:italic;color:#2b5f8c">M2023-C.18.4</div>
<div class="tx" style="left:887.20px;top:585px;letter-spacing:-0.700px;font-style:italic;color:#2b5f8c">yes</div>
<div class="tx" style="left:1018.30px;top:585px;letter-spacing:-0.514px;font-style:italic;color:#2b5f8c">Advisory</div>
<div class="tx" style="left:1126.40px;top:585px;letter-spacing:-0.400px;font-style:italic;color:#2b5f8c">Advisory</div>
<div class="tx" style="left:655.50px;top:612px;letter-spacing:-0.545px;font-style:italic;color:#2b5f8c">M2023-C.18.5</div>
<div class="tx" style="left:887.20px;top:612px;letter-spacing:-0.700px;font-style:italic;color:#2b5f8c">yes</div>
<div class="tx" style="left:1018.30px;top:612px;letter-spacing:-0.514px;font-style:italic;color:#2b5f8c">Advisory</div>
<div class="tx" style="left:1125.40px;top:612px;letter-spacing:-0.060px;font-style:italic;color:#2b5f8c">Readability</div>
<div class="tx" style="left:655.50px;top:639px;letter-spacing:-0.545px;font-style:italic;color:#2b5f8c">M2023-C.18.6</div>
<div class="tx" style="left:887.20px;top:639px;letter-spacing:-0.700px;font-style:italic;color:#2b5f8c">yes</div>
<div class="tx" style="left:1017.30px;top:639px;letter-spacing:-0.543px;font-style:italic;color:#2b5f8c">Required</div>
<div class="tx" style="left:1125.40px;top:639px;letter-spacing:-0.514px;font-style:italic;color:#2b5f8c">Required</div>
<div class="tx" style="left:675.60px;top:666px;letter-spacing:0.095px;">pointered-deallocation</div>
<div class="tx" style="left:886.20px;top:666px;letter-spacing:-0.700px;">yes</div>
<div class="tx" style="left:675.60px;top:693px;letter-spacing:0.038px;">return-reference-local</div>
<div class="tx" style="left:886.20px;top:693px;letter-spacing:-0.700px;">yes</div>
<div class="tx" style="left:655.50px;top:720px;letter-spacing:-0.545px;font-style:italic;color:#2b5f8c">M2023-C.18.7</div>
<div class="tx" style="left:887.20px;top:720px;letter-spacing:-0.700px;font-style:italic;color:#2b5f8c">yes</div>
<div class="tx" style="left:1017.30px;top:720px;letter-spacing:-0.543px;font-style:italic;color:#2b5f8c">Required</div>
<div class="tx" style="left:1125.40px;top:720px;letter-spacing:-0.514px;font-style:italic;color:#2b5f8c">Required</div>
<div class="tx" style="left:655.50px;top:747px;letter-spacing:-0.545px;font-style:italic;color:#2b5f8c">M2023-C.18.8</div>
<div class="tx" style="left:887.20px;top:747px;letter-spacing:-0.700px;font-style:italic;color:#2b5f8c">yes</div>
<div class="tx" style="left:1017.30px;top:747px;letter-spacing:-0.543px;font-style:italic;color:#2b5f8c">Required</div>
<div class="tx" style="left:1125.40px;top:747px;letter-spacing:-0.514px;font-style:italic;color:#2b5f8c">Required</div>
<div class="tx" style="left:655.50px;top:774px;letter-spacing:-0.545px;font-style:italic;color:#2b5f8c">M2023-C.18.9</div>
<div class="tx" style="left:887.20px;top:774px;letter-spacing:-0.700px;font-style:italic;color:#2b5f8c">yes</div>
<div class="tx" style="left:1017.30px;top:774px;letter-spacing:-0.543px;font-style:italic;color:#2b5f8c">Required</div>
<div class="tx" style="left:1125.40px;top:774px;letter-spacing:-0.514px;font-style:italic;color:#2b5f8c">Required</div>
<div class="tx" style="left:655.50px;top:801px;letter-spacing:-0.500px;font-style:italic;color:#2b5f8c">M2023-C.18.10</div>
<div class="tx" style="left:887.20px;top:801px;letter-spacing:-0.700px;font-style:italic;color:#2b5f8c">yes</div>
<div class="tx" style="left:1017.30px;top:801px;letter-spacing:0.050px;font-style:italic;color:#2b5f8c">Mandatory</div>
<div class="tx" style="left:635.30px;top:828px;letter-spacing:-0.200px;font-style:italic;color:#2b5f8c">M2023-C.19. Overlapping storage</div>
<div class="tx" style="left:887.20px;top:828px;letter-spacing:-0.700px;font-style:italic;color:#2b5f8c">yes</div>
</body></html>
